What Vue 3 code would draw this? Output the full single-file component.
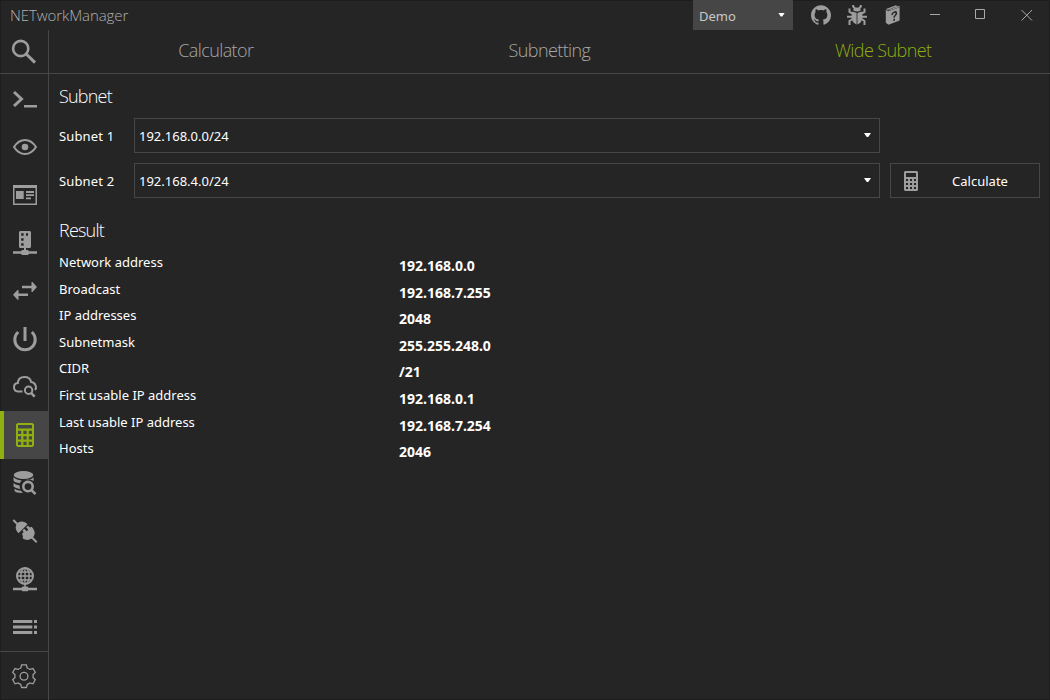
<script setup>
import { ref } from 'vue'

const tabs = ['Calculator', 'Subnetting', 'Wide Subnet']
const activeTab = ref('Wide Subnet')
const tools = ['prompt', 'eye', 'card', 'server', 'arrows', 'power', 'cloud', 'calc', 'db', 'plug', 'globe', 'list']
const activeTool = ref('calc')
const subnets = ['192.168.0.0/24', '192.168.4.0/24']
const results = [
  ['Network address', '192.168.0.0'],
  ['Broadcast', '192.168.7.255'],
  ['IP addresses', '2048'],
  ['Subnetmask', '255.255.248.0'],
  ['CIDR', '/21'],
  ['First usable IP address', '192.168.0.1'],
  ['Last usable IP address', '192.168.7.254'],
  ['Hosts', '2046'],
]
</script>

<template>
  <div class="window">
    <header class="titlebar">
      <span class="app-name">NETworkManager</span>
      <div class="profile"><span>Demo</span><i class="caret"></i></div>
      <div class="title-icons">
        <svg width="20" height="20" viewBox="0 0 24 24"><path d="M12 .297c-6.63 0-12 5.373-12 12 0 5.303 3.438 9.8 8.205 11.385.6.113.82-.258.82-.577 0-.285-.01-1.04-.015-2.04-3.338.724-4.042-1.61-4.042-1.61C4.422 18.07 3.633 17.7 3.633 17.7c-1.087-.744.084-.729.084-.729 1.205.084 1.838 1.236 1.838 1.236 1.07 1.835 2.809 1.305 3.495.998.108-.776.417-1.305.76-1.605-2.665-.3-5.466-1.332-5.466-5.93 0-1.31.465-2.38 1.235-3.22-.135-.303-.54-1.523.105-3.176 0 0 1.005-.322 3.3 1.23.96-.267 1.98-.399 3-.405 1.02.006 2.04.138 3 .405 2.28-1.552 3.285-1.23 3.285-1.23.645 1.653.24 2.873.12 3.176.765.84 1.23 1.91 1.23 3.22 0 4.61-2.805 5.625-5.475 5.92.42.36.81 1.096.81 2.22 0 1.606-.015 2.896-.015 3.286 0 .315.21.69.825.57C20.565 22.092 24 17.592 24 12.297c0-6.627-5.373-12-12-12" /></svg>
        <svg width="20" height="20" viewBox="0 0 20 20">
          <path d="M6.2 5.2Q6.6 2.6 10 2.6T13.8 5.2Q12 6.4 10 6.4T6.2 5.2ZM5.4 6.6 9.6 8V19.4Q4.6 18 4.6 11.6 4.6 8.6 5.4 6.6ZM14.6 6.6 10.4 8V19.4Q15.4 18 15.4 11.6 15.4 8.6 14.6 6.6Z" />
          <path class="line s2" d="M6.2 0V1.500L8 3.500M13.800 0V1.500L12 3.500M5.500 8.500 2.500 7V3.500M14.500 8.500 17.500 7V3.500M0 11.700H5M15 11.700H20M5.500 14 2.500 16V20M14.500 14 17.500 16V20" />
        </svg>
        <svg width="20" height="20" viewBox="0 0 20 20">
          <path d="M3 4 13 .2 14.4 1.200 4.500 5Z" />
          <path fill-rule="evenodd" d="M2.800 4.800 5.500 6.300 16.600 2.200V15.600L5.500 19.800 2.800 17.800ZM8.300 10.300 10 9.700Q10 8.100 11.300 7.700 12.600 7.400 12.500 8.600 12.500 9.500 11.300 10.500 10.200 11.500 10.300 13L11.900 12.400Q11.900 11.600 13 10.600 14.200 9.400 14.200 7.900 14.100 5.400 11.400 6.200 8.500 7.200 8.300 10.300ZM10.300 14.200V16L12 15.400V13.600Z" />
          <path d="M14.600 1.300 16.600 1V2L6 5.800 5.300 5.300Z" />
        </svg>
      </div>
      <div class="controls">
        <svg viewBox="0 0 46 30"><path d="M18 14.500H28" /></svg>
        <svg viewBox="0 0 46 30"><path d="M17.500 9.500H26.500V18.500H17.500Z" /></svg>
        <svg viewBox="0 0 46 30"><path d="M17.500 10 28 20.500M28 10 17.500 20.500" /></svg>
      </div>
    </header>

    <div class="body">
      <aside class="sidebar">
        <div class="search">
          <svg width="48" height="43" viewBox="0 0 48 43">
            <circle class="line s26" cx="20.700" cy="18.500" r="7.600" />
            <path class="line s3" d="M26.200 24 35 32.600" />
          </svg>
        </div>
        <nav class="tools">
          <div v-for="tool in tools" :key="tool" class="tool" :class="{ active: tool === activeTool }">
            <svg width="48" height="48" viewBox="0 0 48 48">
              <g v-if="tool === 'prompt'">
                <path class="line s3" d="M14 17 21.500 24 14 31" />
                <path d="M24 30H37V32.500H24Z" />
              </g>
              <g v-else-if="tool === 'eye'">
                <path class="line s2" d="M14 24Q18.500 17 25 17T36 24Q31.500 31 25 31T14 24Z" />
                <circle cx="25" cy="24" r="3.300" />
              </g>
              <g v-else-if="tool === 'card'">
                <path fill-rule="evenodd" d="M13 14H37V34H13ZM14.500 17V32.500H35.500V17Z" />
                <path d="M16 20H23.700V28H16ZM26 20H34V22H26ZM26 23.200H34V25H26ZM26 26.400H31V28.200H26Z" />
              </g>
              <g v-else-if="tool === 'server'">
                <path fill-rule="evenodd" d="M20 12H30L31 13V28L30 29H20L19 28V13ZM21.200 14.300V16.700H23.600V14.300ZM26 14.300V16.700H28V14.300ZM21.200 19.300V21.700H23.600V19.300ZM21.200 24.300V26.700H23.600V24.300Z" />
                <path d="M24 29H26V31H28L29 32.200H37V34.800H29L28 36H22L21 34.800H13V32.200H21L22 31H24Z" />
              </g>
              <g v-else-if="tool === 'arrows'">
                <path d="M22 18.800H31.500V15H32.500L37 20 32.500 25H31.500V21.200H22ZM28 26.500H18.500V23H17.500L13 27.800 17.500 32.700H18.500V29H28Z" />
              </g>
              <g v-else-if="tool === 'power'">
                <path class="line s3" d="M18.200 17A10.200 10.200 0 1 0 31.800 17" />
                <path d="M23.500 12H26.500V26H23.500Z" />
              </g>
              <g v-else-if="tool === 'cloud'">
                <path class="line s2" d="M22.500 28.500H18Q14 28 14 24.200 14 20.600 17.800 20.100 18.200 14 24.500 14 30.200 14 31.200 19.100 36 20 36 25.500L35 27" />
                <circle class="line s2" cx="28.600" cy="27.200" r="3.700" />
                <path class="line s26" d="M31 29.800 34.700 33.600" />
              </g>
              <g v-else-if="tool === 'calc'">
                <path fill-rule="evenodd" d="M17.500 12H32.500L34 13.500V34.500L32.500 36H17.500L16 34.500V13.500ZM18 14V17.500H32V14ZM18 19.700V23H21.200V19.700ZM23.400 19.700V23H26.600V19.700ZM28.800 19.700V23H32V19.700ZM18 25.200V28.500H21.200V25.200ZM23.400 25.200V28.500H26.600V25.200ZM28.800 25.200V28.500H32V25.200ZM18 30.700V34H21.200V30.700ZM23.400 30.700V34H26.600V30.700ZM28.800 30.700V34H32V30.700Z" />
              </g>
              <g v-else-if="tool === 'db'">
                <ellipse cx="23.500" cy="16" rx="9.800" ry="4" />
                <path d="M13.500 18Q15.500 21 21.800 21.400 20.300 22.600 19.900 24.300 14.500 23.500 13.500 21.500ZM13.500 23.800Q15 25.800 19.700 26.400 19.500 28.200 20.200 30 14.500 29 13.500 27.300ZM14.500 29.800Q17 31.600 21 31.800L22.800 34Q15.500 34 14.500 31.800ZM24.800 21.300Q31 21 33.500 18.200V22Q30 19.400 24.800 21.300Z" />
                <circle class="line s26" cx="28" cy="27.600" r="4.700" />
                <path class="line s26" d="M31.500 31.200 35.500 35.200" />
              </g>
              <g v-else-if="tool === 'plug'">
                <path class="line s2" d="M13.300 13 17.800 17.500M32 30.500 36.700 35.200" />
                <path d="M27.600 17.300 18.500 26.300Q15.200 23.200 15.800 19.600 16.800 15.200 21 14.600 25 14.200 27.600 17.300Z" />
                <path d="M22 26.800 23.700 25.100 22.500 23.700Q23 22 24.500 22L26.700 24.200 28.300 22.600 26.200 20.500Q26.700 18.700 28.300 18.900L30 20.600 31.700 19.800Q36.300 24.800 33.800 29.300L31.800 31.600Q27.300 34.500 22.800 31.600Q23.500 29.500 22 26.800Z" />
              </g>
              <g v-else-if="tool === 'globe'">
                <circle class="line s2" cx="25" cy="21" r="8" />
                <ellipse class="line s15" cx="25" cy="21" rx="4.200" ry="8" />
                <path class="line s15" d="M25 13V32M17 21H33M18.500 17H31.500M18.500 25H31.500" />
                <path d="M22.500 31.500H27.500L28.500 32.700H37V35.200H28.500L27.500 36.200H22.500L21.500 35.200H13V32.700H21.500Z" />
              </g>
              <g v-else>
                <path d="M13 17H32.300V20H13ZM13 22.500H32.300V25.500H13ZM13 28H32.300V31H13ZM34 17H37V20H34ZM34 22.500H37V25.500H34ZM34 28H37V31H34Z" />
              </g>
            </svg>
          </div>
        </nav>
        <div class="settings">
          <svg width="48" height="48" viewBox="0 0 48 48">
            <path class="line s13" d="M21.600 12.800H26.400L27.200 16Q28.700 16.500 29.800 17.400L33 16.500 35.300 20.500 33 22.800Q33.300 24.200 33 25.500L35.300 27.700 33 31.800 29.800 30.900Q28.700 31.800 27.200 32.400L26.400 35.500H21.600L20.800 32.400Q19.300 31.800 18.200 30.900L15 31.800 12.700 27.700 15 25.500Q14.700 24.200 15 22.800L12.700 20.500 15 16.500 18.200 17.400Q19.300 16.500 20.800 16Z" />
            <circle class="line s13" cx="24" cy="24.200" r="3.900" />
          </svg>
        </div>
      </aside>

      <main class="main">
        <div class="tabs">
          <div v-for="tab in tabs" :key="tab" class="tab" :class="{ active: tab === activeTab }"><span>{{ tab }}</span></div>
        </div>
        <div class="content">
          <h2>Subnet</h2>
          <div class="form">
            <div class="fields">
              <div v-for="(subnet, i) in subnets" :key="subnet" class="field">
                <label>Subnet {{ i + 1 }}</label>
                <div class="combo"><span>{{ subnet }}</span><i class="caret"></i></div>
              </div>
            </div>
            <button class="calculate">
              <svg width="14" height="20" viewBox="0 0 14 20">
                <path fill-rule="evenodd" d="M1 0H13L14 1V19L13 20H1L0 19V1ZM2 2V6H12V2ZM2 8V10H4V8ZM6 8V10H8V8ZM10 8V10H12V8ZM2 12V14H4V12ZM6 12V14H8V12ZM10 12V14H12V12ZM2 16V18H4V16ZM6 16V18H8V16ZM10 16V18H12V16Z" />
              </svg>
              <span>Calculate</span>
            </button>
          </div>
          <h2 class="result-title">Result</h2>
          <dl class="results">
            <div v-for="[name, value] in results" :key="name" class="row">
              <dt>{{ name }}</dt>
              <dd>{{ value }}</dd>
            </div>
          </dl>
        </div>
      </main>
    </div>
  </div>
</template>

<style>
body { background: #252525; }
</style>

<style scoped>
* { box-sizing: border-box; }
.window {
  width: 1050px; height: 700px; overflow: hidden; display: flex; flex-direction: column;
  background: #252525; color: #fff; font: 13px/18px "Noto Sans", "Open Sans", sans-serif;
  box-shadow: inset 0 0 0 1px #1d1d1d;
}
svg { display: block; fill: #9d9d9d; flex: none; }
.line { fill: none; stroke: #9d9d9d; }
.s13 { stroke-width: 1.3; }
.s15 { stroke-width: 1.4; }
.s2 { stroke-width: 2; }
.s26 { stroke-width: 2.6; }
.s3 { stroke-width: 3; }
.titlebar { height: 30px; display: flex; align-items: center; flex: none; }
.app-name { width: 693px; padding-left: 10px; font: 300 15px/20px "Open Sans", sans-serif; letter-spacing: -0.08px; color: #b0b0b0; }
.profile { width: 100px; height: 30px; background: #464646; display: flex; align-items: center; justify-content: space-between; padding: 2px 8px 0 6px; color: #c8c8c8; }
.profile .caret { margin-top: -3px; }
.caret { width: 7px; height: 4px; margin-top: -1px; background: #fff; clip-path: polygon(0 0, 100% 0, 60% 100%, 40% 100%); }
.title-icons { display: flex; gap: 16px; margin-left: 18px; }
.controls { display: flex; margin-left: auto; }
.controls svg { width: 46px; height: 30px; fill: none; stroke: #a8a8a8; stroke-width: 1; }
.body { flex: 1; display: flex; min-height: 0; }
.sidebar { width: 49px; border-right: 1px solid #474747; display: flex; flex-direction: column; }
.search { height: 44px; border-bottom: 1px solid #474747; flex: none; }
.tools { padding-top: 1px; }
.tool { height: 48px; }
.tool.active { background: #464646; box-shadow: inset 4px 0 #8fb010; }
.tool.active svg { fill: #8fb010; }
.settings { border-top: 1px solid #474747; height: 49px; flex: none; }
.main { flex: 1; display: flex; flex-direction: column; }
.tabs { height: 44px; border-bottom: 1px solid #474747; display: grid; grid-template-columns: repeat(3, 1fr); flex: none; }
.tab { text-align: center; font: 300 18px/24px "Open Sans", sans-serif; letter-spacing: -0.6px; padding-top: 8px; color: #a8a8a8; }
.tab.active { color: #8fb010; }
.content { padding: 9px 10px 0; }
h2 { margin: 0; font: 300 18px/26px "Open Sans", sans-serif; letter-spacing: -0.8px; }
.form { display: flex; align-items: flex-end; gap: 10px; margin-top: 9px; }
.fields { flex: 1; display: grid; row-gap: 10px; }
.field { display: grid; grid-template-columns: 75px 1fr; align-items: center; }
.field label { letter-spacing: 0.15px; }
.combo { height: 35px; border: 1px solid #474747; display: flex; align-items: center; justify-content: space-between; padding: 0 8px 0 4px; }
.calculate { width: 150px; height: 35px; border: 1px solid #474747; background: none; color: inherit; font: inherit; display: flex; align-items: center; padding: 0 0 0 13px; }
.calculate span { flex: 1; text-align: center; padding-left: 3px; }
.result-title { margin-top: 19px; }
.results { margin: 10px 0 0; }
.row { display: grid; grid-template-columns: 340px 1fr; height: 26.6px; }
dt { margin: 0; }
dd { margin: 4px 0 0; font-size: 14px; font-weight: 700; }
</style>
